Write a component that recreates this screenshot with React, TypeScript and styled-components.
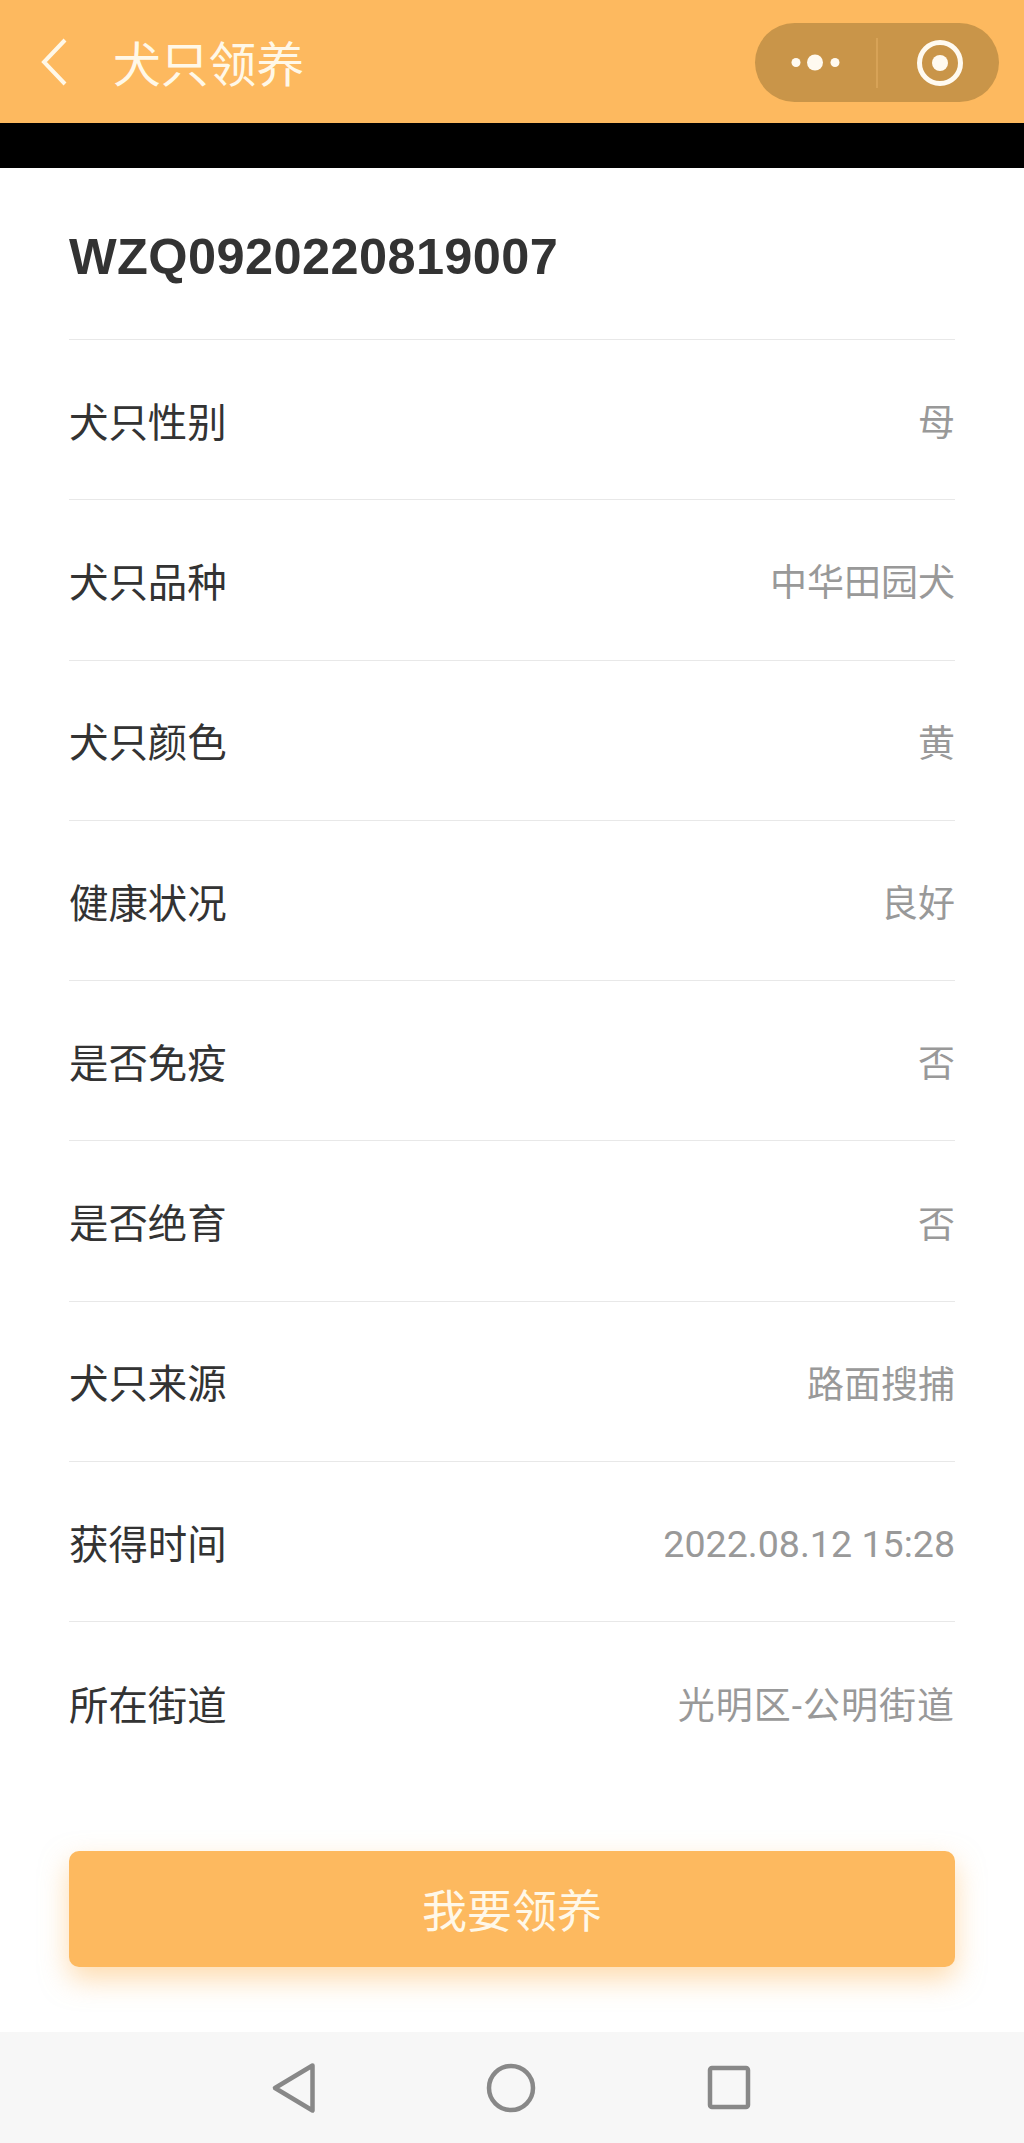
import React from 'react';
import styled, {createGlobalStyle} from 'styled-components';

const CJK = '"Noto Sans CJK SC", "Noto Sans", sans-serif';
const ORANGE = '#fdb95f';

const GlobalStyle = createGlobalStyle`
  html, body {
    margin: 0;
    padding: 0;
    background: #fff;
    font-family: ${CJK};
  }
`;

const Page = styled.div`
  width: 1024px;
  height: 2143px;
  display: flex;
  flex-direction: column;
  overflow: hidden;
  background: #fff;
`;

const Header = styled.header`
  height: 123px;
  flex: none;
  display: flex;
  align-items: center;
  padding: 1px 25px 0 40px;
  box-sizing: border-box;
  background: ${ORANGE};
`;

const BackIcon = styled.svg`
  width: 30px;
  height: 50px;
  flex: none;
  margin-right: 43px;
`;

const HeaderTitle = styled.h1`
  flex: 1;
  margin: 0;
  font-size: 47.8px;
  line-height: 60px;
  font-weight: 400;
  color: #fff8e8;
`;

const Capsule = styled.div`
  width: 244px;
  height: 79px;
  flex: none;
  border-radius: 40px;
  background: #c99549;
`;

const CapsuleIcon = styled.svg`
  display: block;
  width: 244px;
  height: 79px;
`;

const BlackBand = styled.div`
  height: 45px;
  flex: none;
  background: #000;
`;

const Content = styled.main`
  flex: 1;
  display: flex;
  flex-direction: column;
  padding: 0 69px;
`;

const DogCode = styled.div`
  height: 172px;
  flex: none;
  display: flex;
  align-items: center;
  padding-top: 6px;
  box-sizing: border-box;
  border-bottom: 1.5px solid #e8e8e8;
  font-family: "Liberation Sans", Arial, sans-serif;
  font-size: 50.5px;
  font-weight: 700;
  letter-spacing: 0.4px;
  color: #333;
`;

const Row = styled.div`
  height: 160.3px;
  flex: none;
  display: flex;
  align-items: center;
  justify-content: space-between;
  box-sizing: border-box;
  border-bottom: 1.5px solid #e8e8e8;

  &:last-of-type {
    border-bottom: none;
  }
`;

const Label = styled.span`
  padding-bottom: 1px;
  font-size: 39.4px;
  color: #333;
`;

const Value = styled.span<{$size?: number; $tracking?: number; $drop?: number}>`
  font-family: Roboto, ${CJK};
  font-size: ${p => p.$size ?? 37}px;
  letter-spacing: ${p => p.$tracking ?? 0}px;
  padding-top: ${p => p.$drop ?? 1}px;
  color: #999;
`;

const AdoptButton = styled.button`
  height: 116px;
  flex: none;
  margin-top: 68px;
  padding: 0;
  border: none;
  border-radius: 10px;
  background: ${ORANGE};
  box-shadow: 0 12px 28px rgba(253, 185, 95, 0.5);
  font-family: ${CJK};
  font-size: 45px;
  color: #fff8e8;
`;

const NavBar = styled.nav`
  height: 111px;
  flex: none;
  display: flex;
  align-items: center;
  justify-content: center;
  gap: 157px;
  background: #f7f7f7;
`;

const NavIcon = styled.svg`
  width: 60px;
  height: 60px;
  flex: none;
  fill: none;
  stroke: #888;
  stroke-width: 4.5;
  stroke-linejoin: round;
`;

const ROWS = [
  {label: '犬只性别', value: '母'},
  {label: '犬只品种', value: '中华田园犬'},
  {label: '犬只颜色', value: '黄'},
  {label: '健康状况', value: '良好'},
  {label: '是否免疫', value: '否'},
  {label: '是否绝育', value: '否'},
  {label: '犬只来源', value: '路面搜捕'},
  {label: '获得时间', value: '2022.08.12 15:28', size: 37.6, drop: 5},
  {label: '所在街道', value: '光明区-公明街道', tracking: 1}
];

const App = () => (
  <Page>
    <GlobalStyle />
    <Header>
      <BackIcon viewBox="0 0 30 50">
        <path d="M25 3 L4 25 L25 47" fill="none" stroke="#fff8e8" strokeWidth="4" />
      </BackIcon>
      <HeaderTitle>犬只领养</HeaderTitle>
      <Capsule>
        <CapsuleIcon viewBox="0 0 244 79">
          <circle cx="41" cy="39.5" r="4.5" fill="#fffaf0" />
          <circle cx="60" cy="39.5" r="8" fill="#fffaf0" />
          <circle cx="80" cy="39.5" r="4.5" fill="#fffaf0" />
          <line x1="122" y1="15" x2="122" y2="65" stroke="#e5b067" strokeWidth="1" />
          <circle cx="185" cy="40" r="20.5" fill="none" stroke="#fffaf0" strokeWidth="5" />
          <circle cx="185" cy="40" r="8" fill="#fffaf0" />
        </CapsuleIcon>
      </Capsule>
    </Header>
    <BlackBand />
    <Content>
      <DogCode>WZQ0920220819007</DogCode>
      {ROWS.map(row => (
        <Row key={row.label}>
          <Label>{row.label}</Label>
          <Value $size={row.size} $tracking={row.tracking} $drop={row.drop}>
            {row.value}
          </Value>
        </Row>
      ))}
      <AdoptButton>我要领养</AdoptButton>
    </Content>
    <NavBar>
      <NavIcon viewBox="0 0 60 60">
        <path d="M47.5 7.5 L10 30 L47.5 52.5 Z" />
      </NavIcon>
      <NavIcon viewBox="0 0 60 60">
        <circle cx="29" cy="30" r="22" />
      </NavIcon>
      <NavIcon viewBox="0 0 60 60">
        <rect x="11" y="10" width="38" height="39" rx="2" />
      </NavIcon>
    </NavBar>
  </Page>
);

export default App;
